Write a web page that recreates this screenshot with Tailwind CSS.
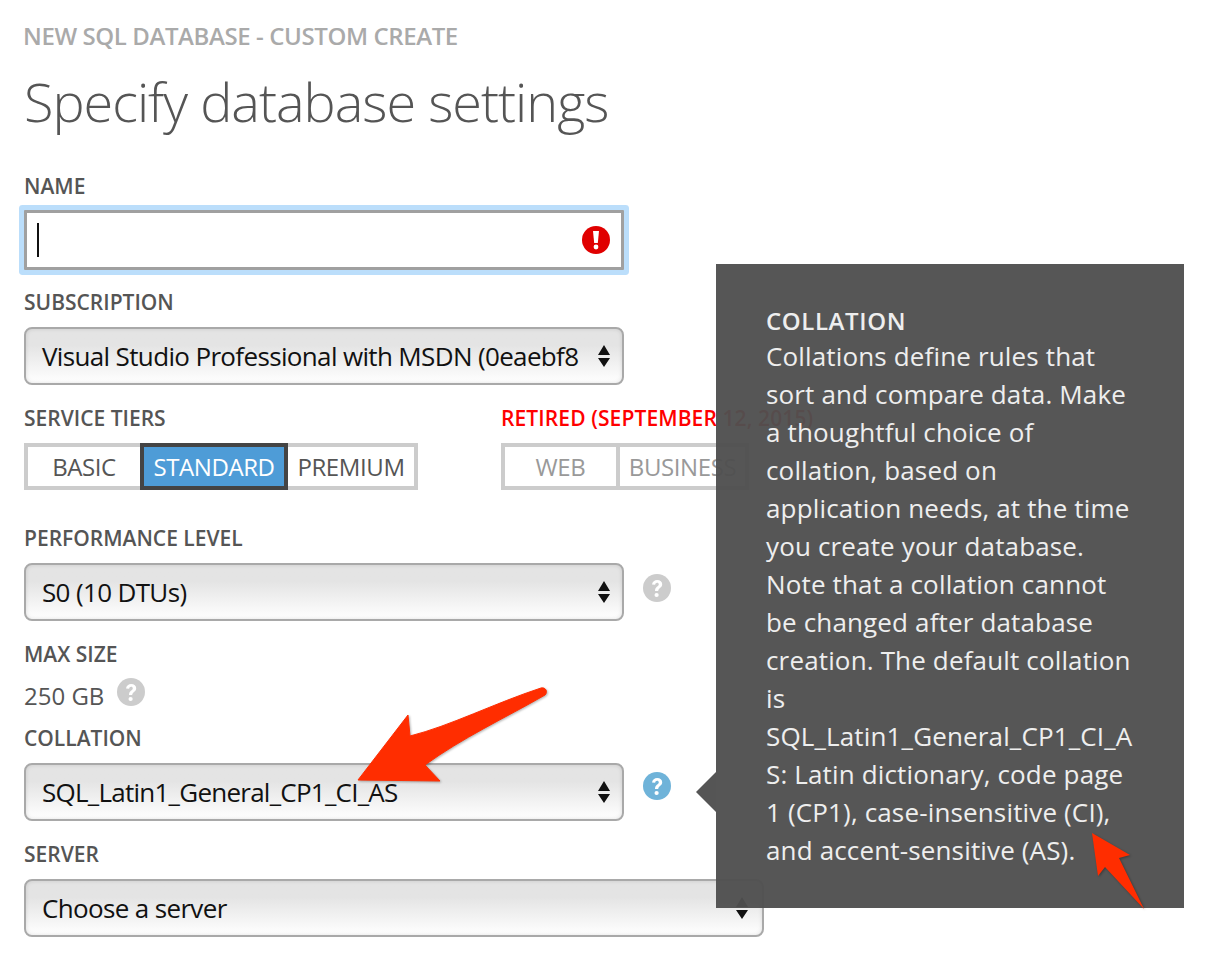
<!DOCTYPE html>
<html lang="en">
<head>
  <meta charset="UTF-8">
  <title>New SQL Database - Custom Create</title>
  <script src="https://cdn.jsdelivr.net/npm/@tailwindcss/browser@4"></script>
</head>
<body class="bg-white font-['Open_Sans',sans-serif] overflow-hidden">
  <div class="relative w-[1210px] h-[960px] overflow-hidden">

    <!-- form column -->
    <div class="flex flex-col items-start pl-6 pt-6">
      <div class="h-6 leading-6 text-[24px] font-semibold text-[#aaaaaa] tracking-[-0.4px] whitespace-nowrap -ml-px">NEW SQL DATABASE - CUSTOM CREATE</div>
      <h1 class="mt-[18px] h-[70px] leading-[70px] text-[54px] font-light text-[#555555] tracking-[-1px] whitespace-nowrap">Specify database settings</h1>

      <div class="mt-[38px] h-6 leading-6 text-[21px] font-semibold text-[#555555]">NAME</div>
      <div class="mt-3 w-[600px] h-[60px] border-[3px] border-[#a0a0a0] bg-white rounded-[1px] shadow-[0_0_0_5px_#bbdefb] flex items-center justify-between pl-[10px] pr-[11px]">
        <span class="w-0.5 h-[34px] bg-[#111111]"></span>
        <svg width="28" height="28" viewBox="0 0 28 28">
          <circle cx="14" cy="14" r="14" fill="#e00000"/>
          <path d="M11 5h6l-1.2 12h-3.6z" fill="#ffffff"/>
          <circle cx="14" cy="21" r="2.4" fill="#ffffff"/>
        </svg>
      </div>

      <div class="mt-5 h-6 leading-6 text-[21px] font-semibold text-[#555555]">SUBSCRIPTION</div>
      <div class="mt-[13px] w-[600px] h-[58px] border-2 border-[#a9a9a9] rounded-lg bg-linear-to-b from-[#e4e4e4] from-30% to-white shadow-[inset_0_0_4px_rgba(0,0,0,0.12)] flex items-center justify-between pl-4 pr-[12px] text-[26px] text-[#111111] tracking-[-0.65px] whitespace-nowrap">
        <span>Visual Studio Professional with MSDN (0eaebf8</span>
        <svg width="12" height="22" viewBox="0 0 12 22"><path d="M6 0l6 10H0zM0 13h12l-6 9z" fill="#111111"/></svg>
      </div>

      <div class="mt-[21px] flex">
        <div class="w-[477px]">
          <div class="h-6 leading-6 text-[21px] font-semibold text-[#555555]">SERVICE TIERS</div>
          <div class="mt-[13px] flex w-[394px] h-[47px] text-[24px] tracking-[-0.4px]">
            <div class="w-[116px] border-y-4 border-l-4 border-[#cccccc] flex items-center justify-center text-[#555555]">BASIC</div>
            <div class="w-[148px] border-4 border-[#444444] bg-[#4e9cd7] flex items-center justify-center text-white">STANDARD</div>
            <div class="w-[130px] border-y-4 border-r-4 border-[#cccccc] flex items-center justify-center text-[#555555]">PREMIUM</div>
          </div>
        </div>
        <div>
          <div class="h-6 leading-6 text-[21px] font-semibold text-[#ff0000] tracking-[0.1px] whitespace-nowrap">RETIRED (SEPTEMBER 12, 2015)</div>
          <div class="mt-[13px] flex w-[248px] h-[47px] border-4 border-[#cccccc] text-[24px] tracking-[-0.4px] text-[#999999]">
            <div class="w-[115px] border-r-4 border-[#cccccc] flex items-center justify-center">WEB</div>
            <div class="flex-1 flex items-center justify-center">BUSINESS</div>
          </div>
        </div>
      </div>

      <div class="mt-9 h-6 leading-6 text-[21px] font-semibold text-[#555555]">PERFORMANCE LEVEL</div>
      <div class="mt-[13px] flex items-start">
        <div class="w-[600px] h-[58px] border-2 border-[#a9a9a9] rounded-lg bg-linear-to-b from-[#e4e4e4] from-30% to-white shadow-[inset_0_0_4px_rgba(0,0,0,0.12)] flex items-center justify-between pl-4 pr-[12px] text-[26px] text-[#111111] tracking-[-0.65px]">
          <span>S0 (10 DTUs)</span>
          <svg width="12" height="22" viewBox="0 0 12 22"><path d="M6 0l6 10H0zM0 13h12l-6 9z" fill="#111111"/></svg>
        </div>
        <svg class="ml-[19px] mt-[11px]" width="28" height="28" viewBox="0 0 28 28">
          <circle cx="14" cy="14" r="14" fill="#cccccc"/>
          <path d="M9 10.5c.4-3 2.6-4.5 5.2-4.5 3 0 5 1.7 5 4.2 0 3.6-4 3.7-4 6.8h-3.2c0-4.4 3.8-4.4 3.8-6.7 0-1-.7-1.6-1.7-1.6-1.1 0-1.8.7-2 2z" fill="#ffffff"/>
          <circle cx="13.6" cy="21" r="2.1" fill="#ffffff"/>
        </svg>
      </div>

      <div class="mt-[21px] h-6 leading-6 text-[21px] font-semibold text-[#555555]">MAX SIZE</div>
      <div class="mt-[18px] h-6 flex items-center">
        <span class="text-[24px] leading-6 text-[#555555]">250 GB</span>
        <svg class="ml-[13px] -mt-2" width="28" height="28" viewBox="0 0 28 28">
          <circle cx="14" cy="14" r="14" fill="#cccccc"/>
          <path d="M9 10.5c.4-3 2.6-4.5 5.2-4.5 3 0 5 1.7 5 4.2 0 3.6-4 3.7-4 6.8h-3.2c0-4.4 3.8-4.4 3.8-6.7 0-1-.7-1.6-1.7-1.6-1.1 0-1.8.7-2 2z" fill="#ffffff"/>
          <circle cx="13.6" cy="21" r="2.1" fill="#ffffff"/>
        </svg>
      </div>

      <div class="mt-[18px] h-6 leading-6 text-[21px] font-semibold text-[#555555]">COLLATION</div>
      <div class="mt-[13px] flex items-start">
        <div class="w-[600px] h-[58px] border-2 border-[#a9a9a9] rounded-lg bg-linear-to-b from-[#e4e4e4] from-30% to-white shadow-[inset_0_0_4px_rgba(0,0,0,0.12)] flex items-center justify-between pl-4 pr-[12px] text-[26px] text-[#111111] tracking-[-0.75px]">
          <span>SQL_Latin1_General_CP1_CI_AS</span>
          <svg width="12" height="22" viewBox="0 0 12 22"><path d="M6 0l6 10H0zM0 13h12l-6 9z" fill="#111111"/></svg>
        </div>
        <svg class="ml-[19px] mt-[9px]" width="28" height="28" viewBox="0 0 28 28">
          <circle cx="14" cy="14" r="14" fill="#6fb3d9"/>
          <path d="M9 10.5c.4-3 2.6-4.5 5.2-4.5 3 0 5 1.7 5 4.2 0 3.6-4 3.7-4 6.8h-3.2c0-4.4 3.8-4.4 3.8-6.7 0-1-.7-1.6-1.7-1.6-1.1 0-1.8.7-2 2z" fill="#ffffff"/>
          <circle cx="13.6" cy="21" r="2.1" fill="#ffffff"/>
        </svg>
      </div>

      <div class="mt-[21px] h-6 leading-6 text-[21px] font-semibold text-[#555555]">SERVER</div>
      <div class="mt-[13px] w-[740px] h-[58px] border-2 border-[#a9a9a9] rounded-lg bg-linear-to-b from-[#e4e4e4] from-30% to-white shadow-[inset_0_0_4px_rgba(0,0,0,0.12)] flex items-center justify-between pl-4 pr-[14px] text-[26px] text-[#111111] tracking-[-0.65px]">
        <span>Choose a server</span>
        <svg width="12" height="22" viewBox="0 0 12 22"><path d="M6 0l6 10H0zM0 13h12l-6 9z" fill="#111111"/></svg>
      </div>
    </div>

    <!-- help tooltip -->
    <div class="absolute left-[716px] top-[264px] w-[468px] h-[644px] bg-[#4f4f4f]/[.96] pl-[50px] pt-[39px] text-[26px] leading-[38px] text-[#eeeeee] tracking-[0.15px] whitespace-nowrap">
      <div class="h-[34px] leading-9 text-[24px] font-semibold tracking-[0.6px]">COLLATION</div>
      <p>Collations define rules that<br>sort and compare data. Make<br>a thoughtful choice of<br>collation, based on<br>application needs, at the time<br>you create your database.<br>Note that a collation cannot<br>be changed after database<br>creation. The default collation<br>is<br>SQL_Latin1_General_CP1_CI_A<br>S: Latin dictionary, code page<br>1 (CP1), case-insensitive (CI),<br>and accent-sensitive (AS).</p>
    </div>
    <div class="absolute left-[696px] top-[772px] w-5 h-10 bg-[#555555] [clip-path:polygon(100%_0,0_50%,100%_100%)]"></div>

    <!-- annotation arrows -->
    <svg class="absolute left-0 top-0 pointer-events-none drop-shadow-[1px_1px_1px_rgba(0,0,0,0.3)]" width="1210" height="960" viewBox="0 0 1210 960">
      <path d="M358 780L408 715L410 736C450 726 495 703 541 688C546 687 548 692 545 695C505 718 462 738 425 765L440 781Z" fill="#ff2d00" stroke="#ff2d00" stroke-width="1" stroke-linejoin="round"/>
      <path d="M1092 833L1130 855L1119 858L1144 909L1105 867L1098 876Z" fill="#ff2d00"/>
    </svg>
  </div>
</body>
</html>
